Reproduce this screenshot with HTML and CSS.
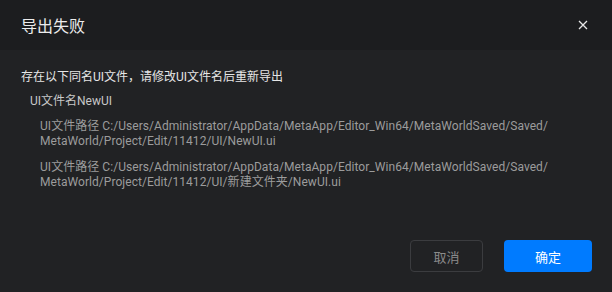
FILE: index.html
```html
<!DOCTYPE html>
<html lang="zh">
<head>
<meta charset="utf-8">
<link rel="stylesheet" href="styles.css">
</head>
<body>
<div class="dialog">
  <div class="header">
    <span class="title">导出失败</span>
    <svg class="close" width="10" height="10" viewBox="0 0 10 10"><path d="M1 1 L9 9 M9 1 L1 9" stroke="#e8e8e8" stroke-width="1.3" fill="none"/></svg>
  </div>
  <div class="content">
    <div class="intro">存在以下同名UI文件，请修改UI文件名后重新导出</div>
    <div class="name">UI文件名NewUI</div>
    <div class="paths">
      <div class="path">UI文件路径 C:/Users/Administrator/AppData/MetaApp/Editor_Win64/MetaWorldSaved/Saved/<wbr>MetaWorld/Project/Edit/11412/UI/NewUI.ui</div>
      <div class="path">UI文件路径 C:/Users/Administrator/AppData/MetaApp/Editor_Win64/MetaWorldSaved/Saved/<wbr>MetaWorld/Project/Edit/11412/UI/新建文件夹/NewUI.ui</div>
    </div>
  </div>
  <div class="footer">
    <button class="btn cancel">取消</button>
    <button class="btn ok">确定</button>
  </div>
</div>
</body>
</html>
```
FILE: styles.css
```css
html, body {
  margin: 0;
  padding: 0;
  background: #212224;
}
.dialog {
  width: 612px;
  height: 292px;
  display: flex;
  flex-direction: column;
  background: #212224;
  font-family: Roboto, "Noto Sans CJK SC", sans-serif;
}
.header {
  height: 50px;
  flex: none;
  background: #1c1d1f;
  display: flex;
  align-items: center;
  justify-content: space-between;
  padding: 0 24px 0 21px;
}
.title {
  font-size: 16px;
  color: #ececec;
}
.close {
  display: block;
}
.content {
  flex: 1;
  padding: 19px 21px 0 21px;
}
.intro {
  font-size: 12px;
  line-height: 16px;
  color: #e6e6e6;
}
.name {
  margin: 8px 0 0 9px;
  font-size: 12px;
  line-height: 16px;
  color: #c8c8c8;
}
.paths {
  margin: 10px 0 0 19px;
  display: flex;
  flex-direction: column;
  gap: 11px;
}
.path {
  font-size: 12px;
  line-height: 15px;
  letter-spacing: 0.05px;
  color: #9c9c9c;
}
.footer {
  display: flex;
  justify-content: flex-end;
  gap: 21px;
  padding: 0 20px 20px 0;
}
.btn {
  height: 32px;
  border-radius: 4px;
  font-family: Roboto, "Noto Sans CJK SC", sans-serif;
  font-size: 13px;
  cursor: pointer;
}
.cancel {
  width: 73px;
  background: transparent;
  border: 1px solid #3b3c3f;
  color: #8a8a8a;
}
.ok {
  width: 88px;
  background: #007bff;
  border: none;
  color: #ffffff;
}
```
